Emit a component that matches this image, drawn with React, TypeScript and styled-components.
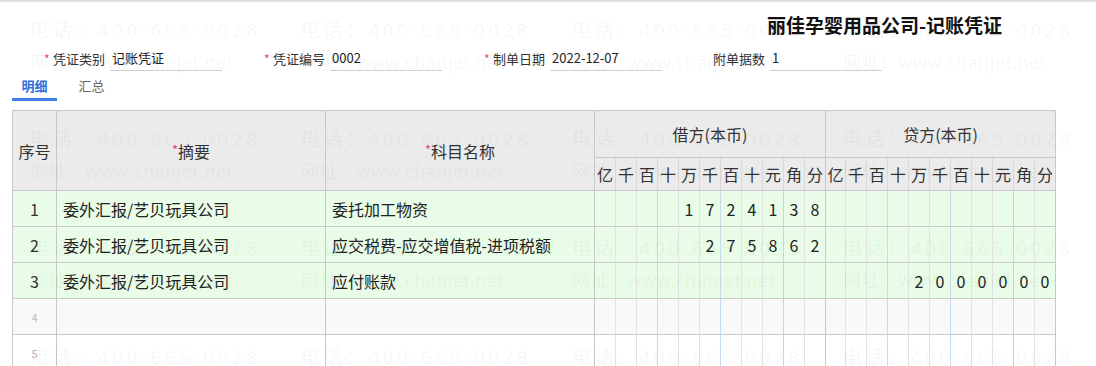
import React from 'react';
import styled, { createGlobalStyle } from 'styled-components';

const GlobalStyle = createGlobalStyle`
  html, body {
    margin: 0;
    padding: 0;
    overflow: hidden;
    background: #fff;
  }
  body {
    font-family: "Noto Sans CJK SC", "Noto Sans", sans-serif;
    color: #333;
  }
`;

const DIGIT_UNITS = ['亿', '千', '百', '十', '万', '千', '百', '十', '元', '角', '分'];

type VoucherRow = {
  index: number;
  summary: string;
  account: string;
  debit: string;
  credit: string;
};

const ROWS: VoucherRow[] = [
  { index: 1, summary: '委外汇报/艺贝玩具公司', account: '委托加工物资', debit: '1724138', credit: '' },
  { index: 2, summary: '委外汇报/艺贝玩具公司', account: '应交税费-应交增值税-进项税额', debit: '275862', credit: '' },
  { index: 3, summary: '委外汇报/艺贝玩具公司', account: '应付账款', debit: '', credit: '2000000' },
  { index: 4, summary: '', account: '', debit: '', credit: '' },
  { index: 5, summary: '', account: '', debit: '', credit: '' },
  { index: 6, summary: '', account: '', debit: '', credit: '' },
];

const Page = styled.div`
  position: relative;
  width: 1096px;
  height: 366px;
  overflow: hidden;
`;

const TopEdge = styled.div`
  height: 3px;
  background: linear-gradient(#d4d4d4, #ededed 60%, #fff);
`;

const TitleRow = styled.div`
  display: flex;
  padding: 10px 0 7px 767px;
`;

const Title = styled.h1`
  margin: 0;
  font-size: 19px;
  line-height: 24px;
  font-weight: 700;
  color: #111;
`;

const FormRow = styled.div`
  display: flex;
  margin-top: 2px;
  padding-left: 42px;
`;

const Field = styled.div`
  width: 220px;
  display: flex;
  align-items: center;
  font-size: 13px;
`;

const Star = styled.span`
  width: 11px;
  padding-left: 2px;
  box-sizing: border-box;
  color: #e8496a;
  font-size: 12px;
`;

const Label = styled.span`
  color: #333;
  line-height: 24px;
`;

const Value = styled.div`
  width: 112px;
  margin-left: 5px;
  padding-left: 2px;
  box-sizing: border-box;
  line-height: 24px;
  border-bottom: 1px solid #cfcfcf;
  color: #222;
`;

const Tabs = styled.div`
  display: flex;
  gap: 12px;
  padding-left: 12px;
`;

const Tab = styled.div<{ $active?: boolean }>`
  width: 45px;
  text-align: center;
  font-size: 13px;
  line-height: 18px;
  padding: 6px 0 3px;
  border-bottom: 3px solid ${(p) => (p.$active ? '#3f7fe6' : 'transparent')};
  color: ${(p) => (p.$active ? '#2e6fdc' : '#666')};
  font-weight: ${(p) => (p.$active ? 700 : 400)};
`;

const Grid = styled.table`
  margin: 9px 0 0 12px;
  border-collapse: separate;
  border-spacing: 0;
  table-layout: fixed;
  width: 1044px;
  border-left: 1px solid #c8c8c8;
  border-top: 1px solid #c8c8c8;
  font-size: 16px;
`;

const HeadCell = styled.th<{ $light?: boolean }>`
  padding: 0;
  background: #ebebeb;
  font-weight: 400;
  color: #333;
  text-align: center;
  border-bottom: 1px solid #c8c8c8;
  border-right: 1px solid ${(p) => (p.$light ? '#d8d8d8' : '#c8c8c8')};
`;

const ReqMark = styled.span`
  color: #e8496a;
  font-size: 13px;
  vertical-align: 3px;
`;

const BodyRow = styled.tr<{ $tone: 'filled' | 'muted' | 'plain' }>`
  height: 36px;
  background: ${(p) => (p.$tone === 'filled' ? '#e8fce8' : p.$tone === 'muted' ? '#f9f9f9' : '#fff')};
`;

const IndexCell = styled.td<{ $empty?: boolean }>`
  padding: 0;
  text-align: center;
  border-right: 1px solid #c8c8c8;
  border-bottom: 1px solid #c8c8c8;
  font-size: ${(p) => (p.$empty ? '11px' : '16px')};
  color: ${(p) => (p.$empty ? '#bbb' : '#333')};
`;

const TextCell = styled.td`
  padding: 0 6px;
  white-space: nowrap;
  overflow: hidden;
  border-right: 1px solid #c8c8c8;
  border-bottom: 1px solid #c8c8c8;
  color: #222;
`;

const DigitCell = styled.td<{ $edge: string }>`
  padding: 0;
  text-align: center;
  border-bottom: 1px solid #c8c8c8;
  border-right: 1px solid ${(p) => p.$edge};
  color: #222;
`;

const Watermark = styled.div`
  position: absolute;
  inset: 0;
  pointer-events: none;
  display: grid;
  grid-template-columns: repeat(4, 271px);
  grid-auto-rows: 109px;
  padding: 14px 0 0 30px;
  font-family: "Open Sans", "Noto Sans CJK SC", sans-serif;
  line-height: 32px;
  color: rgba(0, 0, 0, 0.05);
  white-space: nowrap;
`;

const MarkLine = styled.div<{ $size: number; $spacing: number }>`
  font-size: ${(p) => p.$size}px;
  letter-spacing: ${(p) => p.$spacing}px;
`;

// border colour on the right of digit column i: thousands lines blue, yuan/jiao red
function digitEdge(i: number): string {
  if (i === 10) return '#c8c8c8';
  if (i === 2 || i === 5) return '#c6dcee';
  if (i === 8) return '#f0c4c4';
  return '#e2e2e2';
}

function splitAmount(amount: string): string[] {
  const padded = amount.padStart(11, ' ');
  return padded.split('').map((c) => (c === ' ' ? '' : c));
}

const App = (): JSX.Element => {
  const fields = [
    { required: true, label: '凭证类别', value: '记账凭证' },
    { required: true, label: '凭证编号', value: '0002' },
    { required: true, label: '制单日期', value: '2022-12-07' },
    { required: false, label: '附单据数', value: '1' },
  ];

  const marks = Array.from({ length: 16 });

  return (
    <Page>
      <GlobalStyle />
      <TopEdge />
      <TitleRow>
        <Title>丽佳孕婴用品公司-记账凭证</Title>
      </TitleRow>
      <FormRow>
        {fields.map((f) => (
          <Field key={f.label}>
            <Star>{f.required ? '*' : ''}</Star>
            <Label>{f.label}</Label>
            <Value>{f.value}</Value>
          </Field>
        ))}
      </FormRow>
      <Tabs>
        <Tab $active>明细</Tab>
        <Tab>汇总</Tab>
      </Tabs>
      <Grid>
        <colgroup>
          <col style={{ width: 44 }} />
          <col style={{ width: 269 }} />
          <col style={{ width: 269 }} />
          {DIGIT_UNITS.map((_, i) => (
            <col key={`d${i}`} style={{ width: 21 }} />
          ))}
          {DIGIT_UNITS.map((_, i) => (
            <col key={`c${i}`} style={{ width: i === 0 ? 20 : 21 }} />
          ))}
        </colgroup>
        <thead>
          <tr style={{ height: 47 }}>
            <HeadCell rowSpan={2}>序号</HeadCell>
            <HeadCell rowSpan={2}><ReqMark>*</ReqMark>摘要</HeadCell>
            <HeadCell rowSpan={2}><ReqMark>*</ReqMark>科目名称</HeadCell>
            <HeadCell colSpan={11}>借方(本币)</HeadCell>
            <HeadCell colSpan={11}>贷方(本币)</HeadCell>
          </tr>
          <tr style={{ height: 33 }}>
            {DIGIT_UNITS.map((u, i) => (
              <HeadCell key={`hd${i}`} $light={i !== 10}>{u}</HeadCell>
            ))}
            {DIGIT_UNITS.map((u, i) => (
              <HeadCell key={`hc${i}`} $light={i !== 10}>{u}</HeadCell>
            ))}
          </tr>
        </thead>
        <tbody>
          {ROWS.map((row) => {
            const filled = row.summary !== '';
            const tone = filled ? 'filled' : row.index === 4 ? 'muted' : 'plain';
            const debit = splitAmount(row.debit);
            const credit = splitAmount(row.credit);
            return (
              <BodyRow key={row.index} $tone={tone}>
                <IndexCell $empty={!filled}>{row.index}</IndexCell>
                <TextCell>{row.summary}</TextCell>
                <TextCell>{row.account}</TextCell>
                {debit.map((d, i) => (
                  <DigitCell key={`d${i}`} $edge={digitEdge(i)}>{d}</DigitCell>
                ))}
                {credit.map((d, i) => (
                  <DigitCell key={`c${i}`} $edge={digitEdge(i)}>{d}</DigitCell>
                ))}
              </BodyRow>
            );
          })}
        </tbody>
      </Grid>
      <Watermark>
        {marks.map((_, i) => (
          <div key={i}>
            <MarkLine $size={19} $spacing={3.5}>电话：400-665-0028</MarkLine>
            <MarkLine $size={18} $spacing={0.5}>网址：www.chanjet.net</MarkLine>
          </div>
        ))}
      </Watermark>
    </Page>
  );
};

export default App;
